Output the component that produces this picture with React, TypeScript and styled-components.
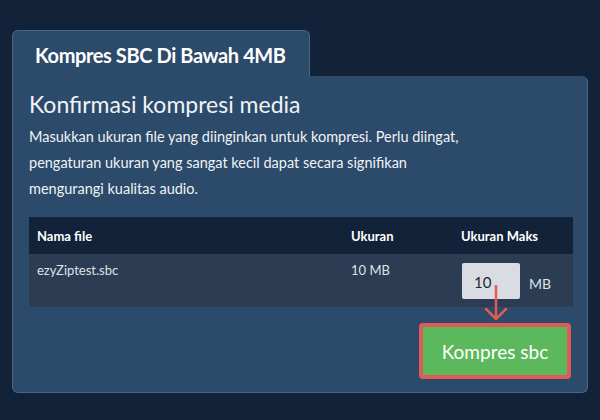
import styled, { createGlobalStyle } from 'styled-components';

const Global = createGlobalStyle`
  body { margin: 0; background: #112239; font-family: Lato, "Open Sans", sans-serif; }
`;

const Page = styled.div`
  padding: 30px 12px 0 12px;
  width: 600px;
  height: 420px;
  box-sizing: border-box;
`;

const Tab = styled.div`
  width: 298px;
  height: 46px;
  box-sizing: border-box;
  background: #2c4a69;
  border: 1px solid #4a6585;
  border-bottom: none;
  border-radius: 6px 6px 0 0;
  color: #fff;
  font-weight: 700;
  font-size: 20px;
  letter-spacing: -0.4px;
  padding: 12px 0 0 22px;
`;

const Panel = styled.div`
  width: 576px;
  height: 317px;
  box-sizing: border-box;
  background: #2c4a69;
  border: 1px solid #4a6585;
  border-top: none;
  border-radius: 0 6px 6px 6px;
  padding: 14px 16px 0 16px;
  color: #fff;
`;

const Title = styled.h2`
  margin: 0;
  font-weight: 400;
  font-size: 23px;
  color: #f0f3f6;
`;

const Text = styled.p`
  margin: 6px 0 15px;
  max-width: 445px;
  font-size: 14.5px;
  line-height: 26px;
  color: #f0f3f6;
`;

const Table = styled.div`
  width: 544px;
`;

const Row = styled.div<{ $head?: boolean }>`
  display: grid;
  grid-template-columns: 314px 110px 1fr;
  padding-left: 8px;
  height: ${p => (p.$head ? 37 : 53)}px;
  background: ${p => (p.$head ? '#112239' : '#2c3d53')};
  align-items: ${p => (p.$head ? 'center' : 'start')};
  font-size: 13px;
  font-weight: ${p => (p.$head ? 700 : 400)};
  color: ${p => (p.$head ? '#fff' : '#dde3ea')};
  & > div { padding-top: ${p => (p.$head ? 0 : 8)}px; }
`;

const MaxCell = styled.div`
  position: relative;
  display: flex;
  align-items: center;
  gap: 9px;
  padding-top: 9px !important;
  padding-left: 1px;
`;

const Input = styled.div`
  width: 58px;
  height: 36px;
  box-sizing: border-box;
  background: #d9dde3;
  border-radius: 2px;
  color: #1b2838;
  font-size: 15px;
  padding: 10px 0 0 12px;
`;

const Unit = styled.span`
  font-size: 14px;
  color: #dde3ea;
  margin-top: 4px;
`;

const Arrow = styled.svg`
  position: absolute;
  left: 20px;
  top: 31px;
`;

const Footer = styled.div`
  display: flex;
  justify-content: flex-end;
  padding-top: 16px;
`;

const Button = styled.button`
  width: 152px;
  height: 56px;
  background: #5cb85c;
  border: 4px solid #e05a57;
  border-radius: 4px;
  color: #fff;
  font-family: Lato, sans-serif;
  font-size: 19px;
`;

export default function App() {
  return (
    <Page>
      <Global />
      <Tab>Kompres SBC Di Bawah 4MB</Tab>
      <Panel>
        <Title>Konfirmasi kompresi media</Title>
        <Text>
          Masukkan ukuran file yang diinginkan untuk kompresi. Perlu diingat, pengaturan ukuran yang sangat kecil dapat secara signifikan mengurangi kualitas audio.
        </Text>
        <Table>
          <Row $head>
            <div>Nama file</div>
            <div>Ukuran</div>
            <div>Ukuran Maks</div>
          </Row>
          <Row>
            <div>ezyZiptest.sbc</div>
            <div>10 MB</div>
            <MaxCell>
              <Input>10</Input>
              <Unit>MB</Unit>
              <Arrow width="30" height="38" viewBox="0 0 30 38">
                <path d="M15 1 V34 M5 24 L15 34 L25 24" stroke="#e05a57" strokeWidth="2.5" fill="none" strokeLinecap="round" />
              </Arrow>
            </MaxCell>
          </Row>
        </Table>
        <Footer>
          <Button>Kompres sbc</Button>
        </Footer>
      </Panel>
    </Page>
  );
}
